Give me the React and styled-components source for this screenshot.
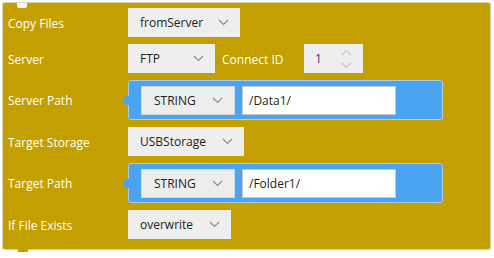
import styled, { createGlobalStyle } from 'styled-components';

const GlobalStyle = createGlobalStyle`
    body {
        margin: 0;
        background: #ffffff;
        font-family: "Open Sans", "Noto Sans", sans-serif;
    }
    #root {
        padding: 3px;
    }
`;

const GOLD = '#c39f00';
const BLUE = '#4aa4f2';

function Chevron() {
    return (
        <svg width="11" height="7" viewBox="0 0 11 7">
            <path d="M1 1 L5.5 5.5 L10 1" fill="none" stroke="#8a8a8a" strokeWidth="1.1" />
        </svg>
    );
}

function Select({ value, width }) {
    return (
        <Dropdown $width={width}>
            <span>{value}</span>
            <Chevron />
        </Dropdown>
    );
}

function StringInput({ value }) {
    return (
        <ValueBlock>
            <Notch />
            <Dropdown $width={94} $inner>
                <span>STRING</span>
                <Chevron />
            </Dropdown>
            <TextInput>{value}</TextInput>
        </ValueBlock>
    );
}

function App() {
    return (
        <>
            <GlobalStyle />
            <Block>
                <TopNotch />
                <Row>
                    <Label>Copy Files</Label>
                    <Select value="fromServer" width={112} />
                </Row>
                <Row>
                    <Label>Server</Label>
                    <Select value="FTP" width={87} />
                    <InlineLabel>Connect ID</InlineLabel>
                    <NumberBox>
                        <span>1</span>
                        <Spinner>
                            <svg width="11" height="22" viewBox="0 0 11 22">
                                <path d="M1 7 L5.5 2.5 L10 7" fill="none" stroke="#c4c4c4" strokeWidth="1.1" />
                                <path d="M1 15 L5.5 19.5 L10 15" fill="none" stroke="#c4c4c4" strokeWidth="1.1" />
                            </svg>
                        </Spinner>
                    </NumberBox>
                </Row>
                <Row $tall>
                    <Label>Server Path</Label>
                    <StringInput value="/Data1/" />
                </Row>
                <Row>
                    <Label>Target Storage</Label>
                    <Select value="USBStorage" width={116} />
                </Row>
                <Row $tall>
                    <Label>Target Path</Label>
                    <StringInput value="/Folder1/" />
                </Row>
                <Row>
                    <Label>If File Exists</Label>
                    <Select value="overwrite" width={103} />
                </Row>
                <BottomTab />
            </Block>
        </>
    );
}

export default App;

const Block = styled.div`
    position: relative;
    width: 487px;
    height: 246px;
    box-sizing: border-box;
    background: ${GOLD};
    border-radius: 2px;
    box-shadow: 0 0 0 1px #d8d2b8, 1px 1px 2px rgba(0, 0, 0, 0.15);
    padding: 5px 0 0 5px;
    display: flex;
    flex-direction: column;
    gap: 7px;
`;

const TopNotch = styled.div`
    position: absolute;
    left: 14px;
    top: 0;
    width: 10px;
    height: 5px;
    background: #ffffff;
    border-radius: 0 0 2px 2px;
`;

const BottomTab = styled.div`
    position: absolute;
    left: 15px;
    bottom: -5px;
    width: 10px;
    height: 5px;
    background: ${GOLD};
    border-radius: 0 0 2px 2px;
`;

const Row = styled.div`
    display: flex;
    align-items: center;
    height: ${(p) => (p.$tall ? '40px' : '29px')};
`;

const Label = styled.div`
    width: 120px;
    color: #ffffff;
    font-size: 12px;
    padding-top: 1px;
`;

const InlineLabel = styled.div`
    width: 89px;
    padding: 1px 0 0 7px;
    box-sizing: border-box;
    color: #ffffff;
    font-size: 12px;
`;

const Dropdown = styled.div`
    width: ${(p) => p.$width}px;
    height: 29px;
    box-sizing: border-box;
    display: flex;
    align-items: center;
    justify-content: space-between;
    padding: 0 11px 0 12px;
    background: ${(p) => (p.$inner ? '#ededed' : '#eeeeee')};
    border: ${(p) => (p.$inner ? '1px solid #d0d8e0' : 'none')};
    color: #222222;
    font-size: 12px;
`;

const NumberBox = styled.div`
    width: 59px;
    height: 29px;
    box-sizing: border-box;
    display: flex;
    align-items: center;
    justify-content: space-between;
    padding: 0 11px 0 11px;
    background: #eeeeee;
    color: #2e3580;
    font-size: 12px;
`;

const Spinner = styled.div`
    display: flex;
    align-items: center;
`;

const ValueBlock = styled.div`
    position: relative;
    width: 315px;
    height: 40px;
    box-sizing: border-box;
    display: flex;
    align-items: center;
    gap: 7px;
    padding-left: 12px;
    background: ${BLUE};
    border: 1px solid #a9cdeb;
    border-radius: 3px;
`;

const Notch = styled.div`
    position: absolute;
    left: -6px;
    top: 15px;
    width: 8px;
    height: 9px;
    background: ${BLUE};
    border-radius: 5px 0 0 5px;
`;

const TextInput = styled.div`
    width: 154px;
    height: 29px;
    box-sizing: border-box;
    display: flex;
    align-items: center;
    padding-left: 6px;
    background: #ffffff;
    border: 1px solid #c8c8c8;
    color: #222222;
    font-size: 12px;
`;
